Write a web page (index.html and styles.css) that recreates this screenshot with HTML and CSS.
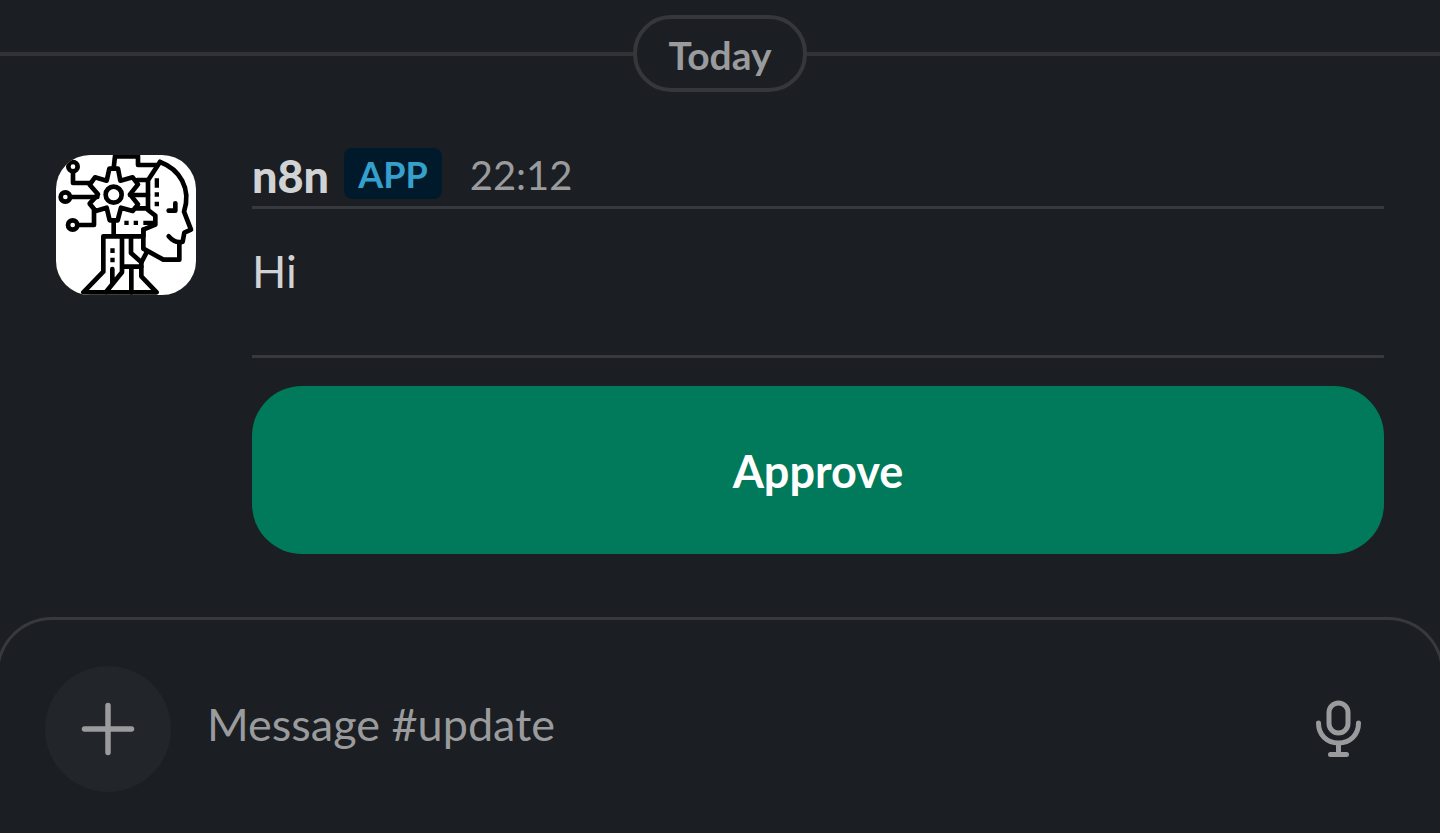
FILE: index.html
```html
<!DOCTYPE html>
<html lang="en">
<head>
<meta charset="utf-8">
<meta name="viewport" content="width=device-width, initial-scale=1">
<title>#update</title>
<link rel="stylesheet" href="styles.css">
</head>
<body>
<main class="messages">
  <div class="day"><span class="day-label">Today</span></div>
  <article class="message">
    <svg class="avatar" viewBox="0 0 420 420" role="img" aria-label="n8n avatar">
      <rect width="420" height="420" fill="#fff"/>
      <g fill="none" stroke="#000" stroke-width="14" stroke-linejoin="round" stroke-linecap="round">
        <circle cx="51" cy="35" r="14"/>
        <path d="M51 50V84H104"/>
        <circle cx="28" cy="126" r="14"/>
        <path d="M44 126H124"/>
        <circle cx="50" cy="210" r="14"/>
        <path d="M65 210H114V166"/>
        <path d="M160 41H186L193 77 230 67 246 88 222 118 246 148 230 168 195 158 185 196H161L152 158 119 168 101 146 126 118 101 89 117 67 152 77Z"/>
        <circle cx="173" cy="119" r="24"/>
        <path d="M173 40 177 4H246V30H304"/>
        <path d="M312 21 276 76V165L298 182V209L262 224V281L322 314H370V262"/>
        <path d="M312 21C370 42 407 100 384 170L405 224 385 233 380 260C364 265 350 258 338 244"/>
        <path d="M244 75H276M222 120H276M240 160H276"/>
        <path d="M338 167H358V145"/>
        <path d="M173 196V244M262 224V244H142V350L82 412H302L256 364V322L272 292"/>
        <path d="M198 244V352L150 411M169 342V388M225 248V294L256 322M198 335H256M226 335V412"/>
      </g>
      <path d="M296 70h13v28h-13zM296 112h13v13h-13zM296 140h13v14h-13zM205 197h13v13h-13zM233 197h13v13h-13zM262 197h36v13h-36zM163 280h13v14h-13zM163 308h13v14h-13z"/>
    </svg>
    <div class="content">
      <header class="meta">
        <strong class="author">n8n</strong>
        <span class="badge">APP</span>
        <time class="time">22:12</time>
      </header>
      <p class="text">Hi</p>
      <button class="approve" type="button">Approve</button>
    </div>
  </article>
</main>
<form class="composer">
  <button class="add" type="button" aria-label="Add attachment">
    <svg class="icon" viewBox="0 0 60 60"><path d="M30 6.500V53.500M6.500 30H53.500" stroke-width="5.500"/></svg>
  </button>
  <input class="field" type="text" aria-label="Message #update" placeholder="Message #update">
  <button class="mic" type="button" aria-label="Record audio">
    <svg class="icon" viewBox="0 0 60 60"><rect x="20" y="4" width="19" height="30" rx="9.500" stroke-width="5"/><path d="M9.500 24C9.500 36 18 44 29.500 44S49.500 36 49.500 24M29.500 44V55M21.500 55.500H37.500" stroke-width="5"/></svg>
  </button>
</form>
</body>
</html>
```
FILE: styles.css
```css
* {
  box-sizing: border-box;
}

body {
  margin: 0;
  min-height: 100vh;
  display: flex;
  flex-direction: column;
  background: #1b1e22;
  color: #d1d2d3;
  font-family: Lato, sans-serif;
  font-size: 45px;
  overflow-x: hidden;
}

button,
input {
  font: inherit;
  border: 0;
  padding: 0;
}

.messages {
  padding-top: 15px;
}

.day {
  display: flex;
  align-items: center;
}

.day::before,
.day::after {
  content: "";
  flex: 1;
  height: 4px;
  background: #313337;
}

.day-label {
  padding: 14px 31px 11px;
  border: 4px solid #35373b;
  border-radius: 38px;
  color: #9a9b9d;
  font-size: 39px;
  font-weight: 700;
  line-height: 44px;
}

.message {
  display: flex;
  gap: 56px;
  padding: 56px 56px 0;
}

.avatar {
  flex: none;
  width: 140px;
  height: 140px;
  margin-top: 7px;
  border-radius: 34px;
}

.content {
  flex: 1;
}

.meta {
  display: flex;
  align-items: flex-start;
}

.author {
  font-weight: 900;
  line-height: 56px;
}

.badge {
  margin: 0 28px 0 15px;
  padding: 0 14px;
  height: 51px;
  border-radius: 8px;
  background: #001a2c;
  color: #36a0cc;
  font-size: 36px;
  font-weight: 700;
  line-height: 53px;
}

.time {
  color: #9a9b9d;
  font-size: 40px;
  line-height: 54px;
}

.text {
  margin: 2px 0 28px;
  padding: 34px 0 56px;
  border-top: 3px solid #38393d;
  border-bottom: 3px solid #38393d;
  line-height: 56px;
}

.approve {
  width: 100%;
  padding: 57px 56px 55px;
  border-radius: 50px;
  background: #007a5a;
  color: #fff;
  font-weight: 700;
  line-height: 56px;
}

.composer {
  flex: 1;
  display: flex;
  align-items: center;
  gap: 36px;
  margin: 63px -4px 0;
  padding: 4px 72px 0 46px;
  border: 3px solid #38393d;
  border-bottom: 0;
  border-radius: 56px 56px 0 0;
}

.add {
  display: grid;
  place-items: center;
  width: 126px;
  height: 126px;
  border-radius: 50%;
  background: #222529;
}

.field {
  flex: 1;
  min-width: 0;
  padding-bottom: 10px;
  background: transparent;
  color: #d1d2d3;
  line-height: 56px;
  outline: 0;
}

.field::placeholder {
  color: #9a9b9d;
  opacity: 1;
}

.mic {
  background: transparent;
}

.icon {
  display: block;
  width: 60px;
  height: 60px;
  fill: none;
  stroke: #9a9b9d;
  stroke-linecap: round;
}
```
